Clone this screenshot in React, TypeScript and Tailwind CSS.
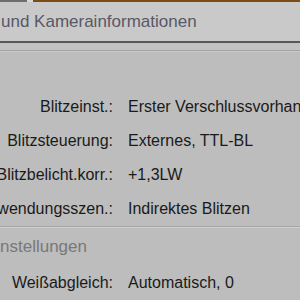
import React from "react";

const rows1 = [
  { label: "Blitzeinst.:", value: "Erster Verschlussvorhan" },
  { label: "Blitzsteuerung:", value: "Externes, TTL-BL" },
  { label: "Blitzbelicht.korr.:", value: "+1,3LW" },
  { label: "wendungsszen.:", value: "Indirektes Blitzen" },
];

function Row({ label, value }: { label: string; value: string }) {
  return (
    <div className="flex h-[34px] items-center whitespace-nowrap">
      <div className="flex w-[113px] shrink-0 justify-end text-[#1a1a1a]">{label}</div>
      <div className="ml-[15px] text-[#1a1a1a]">{value}</div>
    </div>
  );
}

export default function App() {
  return (
    <div
      className="flex h-[300px] w-[300px] flex-col overflow-hidden bg-[#bdbdbd]"
      style={{ fontFamily: '"Liberation Sans", Arial, sans-serif' }}
    >
      <div className="flex h-[2px] shrink-0">
        <div className="w-[27px] bg-[#6e6e6e]" />
        <div className="w-[6px] bg-[#d8d8d8]" />
        <div className="flex-1 bg-[#7c4c16]" />
      </div>
      <div className="flex h-[39px] shrink-0 items-center bg-[#c9c9c9] pl-[1px] text-[17px] text-[#585866] whitespace-nowrap">
        und Kamerainformationen
      </div>
      <div className="h-[2px] shrink-0 bg-[#585858]" />
      <div className="h-[7px] shrink-0 bg-[#c2c2c2]" />
      <div className="h-[1px] shrink-0 bg-[#a2a2a2]" />
      <div className="h-[1px] shrink-0 bg-[#cacaca]" />
      <div className="flex flex-col pt-[38px] text-[16px]">
        {rows1.map((r) => (
          <Row key={r.label} {...r} />
        ))}
      </div>
      <div className="h-[1px] shrink-0 bg-[#a6a6a6]" />
      <div className="h-[1px] shrink-0 bg-[#d0d0d0]" />
      <div className="flex h-[38px] shrink-0 items-center text-[17px] text-[#787878] whitespace-nowrap">
        nstellungen
      </div>
      <div className="flex flex-col text-[16px]">
        <Row label="Weißabgleich:" value="Automatisch, 0" />
      </div>
    </div>
  );
}
